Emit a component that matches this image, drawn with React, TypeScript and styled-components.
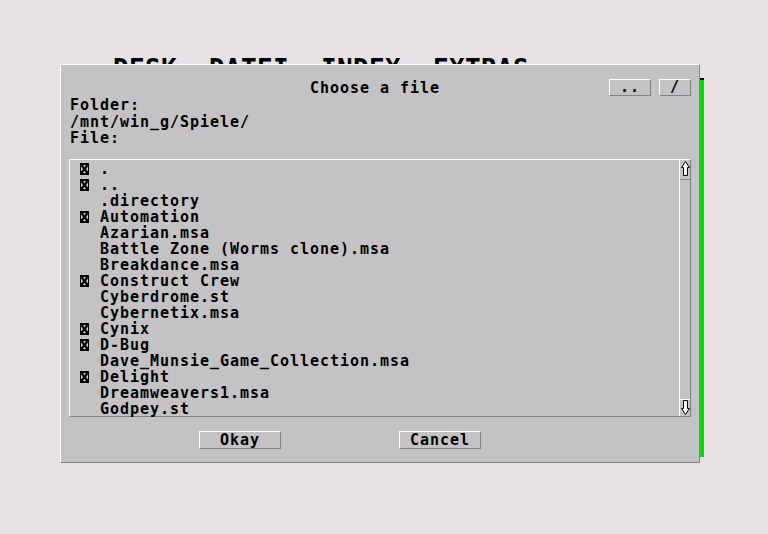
import React from "react";
import styled, { createGlobalStyle } from "styled-components";

const mono = `"DejaVu Sans Mono", "Liberation Mono", monospace`;
const light = "#ffffff";
const shade = "#808080";
const face = "#c4c2c4";

const GlobalStyle = createGlobalStyle`
  html, body {
    margin: 0;
    padding: 0;
    background: #e6e2e6;
  }
`;

const Desktop = styled.div`
  position: relative;
  width: 768px;
  height: 534px;
  overflow: hidden;
  background: #e6e2e6;
`;

const MenuBar = styled.div`
  padding: 56px 0 0 113px;
  font-family: ${mono};
  font-weight: bold;
  font-size: 26px;
  line-height: 26px;
  letter-spacing: 0.35px;
  white-space: pre;
  color: #000;
`;

// edge of the window lying behind the dialog
const BackWindowEdge = styled.div`
  position: absolute;
  left: 700px;
  top: 78px;
  width: 4px;
  height: 377px;
  background: #00dd00;
  border-top: 2px solid #000;
`;

const Dialog = styled.div`
  position: absolute;
  left: 60px;
  top: 64px;
  width: 640px;
  height: 399px;
  box-sizing: border-box;
  padding: 14px 9px 0 9px;
  background: ${face};
  border-top: 1px solid ${light};
  border-left: 1px solid ${light};
  border-right: 1px solid ${shade};
  border-bottom: 1px solid ${shade};
  font-family: ${mono};
  font-weight: bold;
  font-size: 15px;
  letter-spacing: 0.97px;
  color: #000;
`;

const Header = styled.div`
  display: flex;
  align-items: flex-start;
  height: 17px;
`;

const Title = styled.div`
  flex: 1;
  text-align: center;
  padding: 1px 0 0 71px;
  line-height: 17px;
`;

const ToolButtons = styled.div`
  display: flex;
  gap: 8px;
  margin-right: -1px;
`;

const Raised = styled.button<{ $width: number; $height: number }>`
  width: ${(p) => p.$width}px;
  height: ${(p) => p.$height}px;
  box-sizing: border-box;
  padding: 0;
  margin: 0;
  background: ${face};
  border-top: 1px solid ${light};
  border-left: 1px solid ${light};
  border-right: 1px solid ${shade};
  border-bottom: 1px solid ${shade};
  border-radius: 0;
  font-family: ${mono};
  font-weight: bold;
  font-size: 15px;
  letter-spacing: 0.97px;
  line-height: 15px;
  color: #000;
  text-align: center;
`;

const InfoBlock = styled.div`
  padding-top: 1px;
`;

const InfoLine = styled.div`
  line-height: 16.5px;
  white-space: pre;
`;

const ListBox = styled.div`
  display: flex;
  width: 622px;
  height: 258px;
  box-sizing: border-box;
  margin: 12.5px 0 0 -1px;
  border-top: 1px solid ${light};
  border-left: 1px solid ${light};
  border-right: 1px solid ${shade};
  border-bottom: 1px solid ${shade};
`;

const Rows = styled.div`
  flex: 1;
  padding-left: 10px;
`;

const Row = styled.div`
  display: grid;
  grid-template-columns: 20px 1fr;
  align-items: center;
  height: 16px;
  line-height: 18px;
  white-space: pre;
`;

const Scrollbar = styled.div`
  display: flex;
  flex-direction: column;
  width: 11px;
  box-sizing: border-box;
  border-left: 1px solid ${light};
`;

const ArrowUpButton = styled.div`
  height: 20px;
  box-sizing: border-box;
  padding: 0 0 0 1px;
  border-bottom: 1px solid ${shade};
`;

const Track = styled.div`
  flex: 1;
`;

const ArrowDownButton = styled.div`
  height: 17px;
  box-sizing: border-box;
  padding: 0 0 0 1px;
  border-top: 1px solid ${light};
`;

const Footer = styled.div`
  display: flex;
  gap: 118px;
  margin: 14px 0 0 129px;
`;

const FolderMark = () => (
  <svg width="9" height="12" viewBox="0 0 9 12" style={{ display: "block" }}>
    <rect x="0" y="0" width="9" height="2" fill="#000" />
    <rect x="0" y="10" width="9" height="2" fill="#000" />
    <rect x="0" y="0" width="1" height="12" fill="#000" />
    <rect x="8" y="0" width="1" height="12" fill="#000" />
    <path d="M1 1.5 L8 10.5 M8 1.5 L1 10.5" stroke="#000" strokeWidth="2.2" fill="none" />
  </svg>
);

const UpArrow = () => (
  <svg width="9" height="17" viewBox="0 0 9 17" style={{ display: "block" }}>
    <path
      d="M4.5 1.5 L8.5 7.5 L6.5 7.5 L6.5 15.5 L2.5 15.5 L2.5 7.5 L0.5 7.5 Z"
      fill="#fff"
      stroke="#000"
    />
  </svg>
);

const DownArrow = () => (
  <svg width="9" height="16" viewBox="0 0 9 16" style={{ display: "block" }}>
    <path
      d="M2.5 0.5 L6.5 0.5 L6.5 8.5 L8.5 8.5 L4.5 14.5 L0.5 8.5 L2.5 8.5 Z"
      fill="#fff"
      stroke="#000"
    />
  </svg>
);

const entries: { name: string; folder?: boolean }[] = [
  { name: ".", folder: true },
  { name: "..", folder: true },
  { name: ".directory" },
  { name: "Automation", folder: true },
  { name: "Azarian.msa" },
  { name: "Battle Zone (Worms clone).msa" },
  { name: "Breakdance.msa" },
  { name: "Construct Crew", folder: true },
  { name: "Cyberdrome.st" },
  { name: "Cybernetix.msa" },
  { name: "Cynix", folder: true },
  { name: "D-Bug", folder: true },
  { name: "Dave_Munsie_Game_Collection.msa" },
  { name: "Delight", folder: true },
  { name: "Dreamweavers1.msa" },
  { name: "Godpey.st" },
];

export default function App() {
  return (
    <Desktop>
      <GlobalStyle />
      <MenuBar>{"DESK  DATEI  INDEX  EXTRAS"}</MenuBar>
      <BackWindowEdge />
      <Dialog>
        <Header>
          <Title>Choose a file</Title>
          <ToolButtons>
            <Raised $width={42} $height={17}>..</Raised>
            <Raised $width={32} $height={17}>/</Raised>
          </ToolButtons>
        </Header>
        <InfoBlock>
          <InfoLine>Folder:</InfoLine>
          <InfoLine>/mnt/win_g/Spiele/</InfoLine>
          <InfoLine>File:</InfoLine>
        </InfoBlock>
        <ListBox>
          <Rows>
            {entries.map((e) => (
              <Row key={e.name}>
                <span>{e.folder ? <FolderMark /> : null}</span>
                <span>{e.name}</span>
              </Row>
            ))}
          </Rows>
          <Scrollbar>
            <ArrowUpButton>
              <UpArrow />
            </ArrowUpButton>
            <Track />
            <ArrowDownButton>
              <DownArrow />
            </ArrowDownButton>
          </Scrollbar>
        </ListBox>
        <Footer>
          <Raised $width={82} $height={18}>Okay</Raised>
          <Raised $width={82} $height={18}>Cancel</Raised>
        </Footer>
      </Dialog>
    </Desktop>
  );
}
